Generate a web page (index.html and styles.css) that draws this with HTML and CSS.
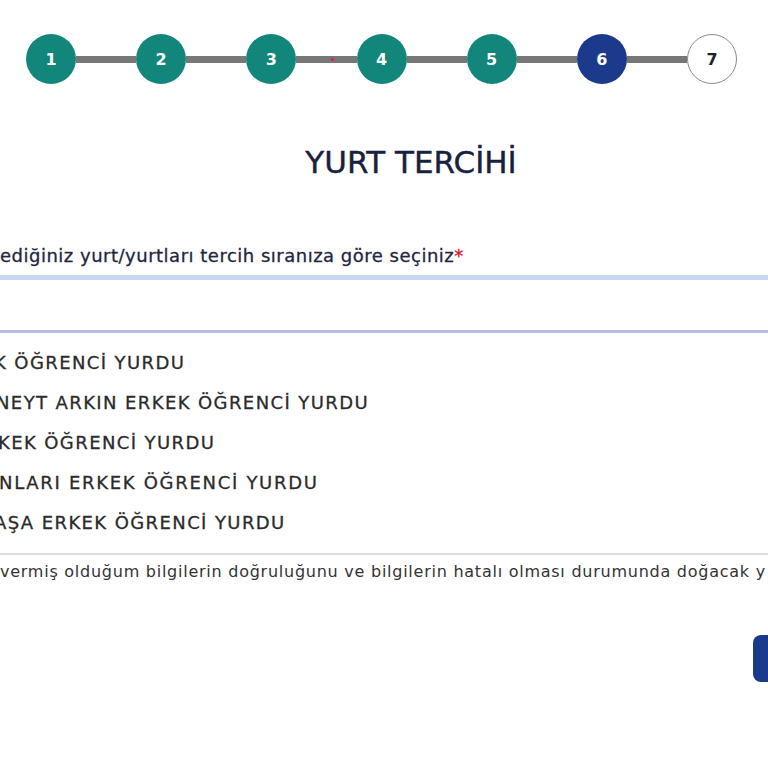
FILE: index.html
```html
<!DOCTYPE html>
<html lang="tr">
<head>
<meta charset="utf-8">
<title>Yurt Tercihi</title>
<link rel="stylesheet" href="styles.css">
</head>
<body>
<div class="page">
  <div class="stepper">
    <div class="step done">1</div>
    <div class="conn"></div>
    <div class="step done">2</div>
    <div class="conn"></div>
    <div class="step done">3</div>
    <div class="conn"><span class="dot"></span></div>
    <div class="step done">4</div>
    <div class="conn"></div>
    <div class="step done">5</div>
    <div class="conn"></div>
    <div class="step current">6</div>
    <div class="conn"></div>
    <div class="step todo">7</div>
  </div>

  <h1 class="title">YURT TERCİHİ</h1>

  <div class="label">ediğiniz yurt/yurtları tercih sıranıza göre seçiniz<span class="req">*</span></div>
  <div class="input"></div>

  <ul class="options">
    <li class="opt o1">K ÖĞRENCİ YURDU</li>
    <li class="opt o2">NEYT ARKIN ERKEK ÖĞRENCİ YURDU</li>
    <li class="opt o3">KEK ÖĞRENCİ YURDU</li>
    <li class="opt o4">NLARI ERKEK ÖĞRENCİ YURDU</li>
    <li class="opt o5">AŞA ERKEK ÖĞRENCİ YURDU</li>
  </ul>

  <div class="consent">vermiş olduğum bilgilerin doğruluğunu ve bilgilerin hatalı olması durumunda doğacak y</div>

  <div class="actions"><button class="btn" type="button"></button></div>
</div>
</body>
</html>
```

FILE: styles.css
```css
html, body {
  margin: 0;
  padding: 0;
  background: #ffffff;
}
body {
  overflow: hidden;
  width: 768px;
  height: 768px;
  font-family: "DejaVu Sans", "Open Sans", sans-serif;
}
.page {
  width: 768px;
}
.stepper {
  display: flex;
  align-items: center;
  width: 711px;
  margin-left: 26px;
  padding-top: 34px;
}
.step {
  flex: 0 0 auto;
  width: 50px;
  height: 50px;
  box-sizing: border-box;
  border-radius: 50%;
  display: flex;
  align-items: center;
  justify-content: center;
  font-size: 16px;
  font-weight: 700;
  color: #ffffff;
}
.step.done { background: #12867a; }
.step.current { background: #1b3a8b; }
.step.todo {
  background: #ffffff;
  border: 1px solid #8a8a8a;
  color: #222222;
}
.conn {
  flex: 1 1 0;
  min-width: 0;
  height: 7px;
  background: #777777;
  display: flex;
  align-items: center;
}
.dot {
  width: 3px;
  height: 3px;
  margin-left: 35px;
  background: #e0203a;
  border-radius: 50%;
}
.title {
  margin: 58px 0 0 0;
  padding-left: 54px;
  text-align: center;
  font-size: 31px;
  line-height: 40px;
  font-weight: 400;
  color: #18213d;
  -webkit-text-stroke: 0.4px #18213d;
}
.label {
  margin-top: 62px;
  font-size: 18px;
  line-height: 24px;
  font-weight: 400;
  color: #1e2640;
  white-space: nowrap;
  letter-spacing: 0.5px;
  -webkit-text-stroke: 0.3px #1e2640;
}
.req { color: #e0102a; -webkit-text-stroke: 0.3px #e0102a; }
.input {
  margin-top: 7px;
  height: 50px;
  border-top: 5px solid #c9d6f5;
  border-bottom: 3px solid #b3bce8;
  background: #fff;
}
.options {
  list-style: none;
  margin: 10px 0 0 0;
  padding: 0;
}
.opt {
  height: 40px;
  line-height: 40px;
  font-size: 18px;
  color: #2b2b2b;
  white-space: nowrap;
  letter-spacing: 1.4px;
  -webkit-text-stroke: 0.3px #2b2b2b;
}
.o1 { text-indent: -6px; }
.o2 { text-indent: -4px; }
.o3 { text-indent: -2px; }
.o4 { text-indent: -1px; letter-spacing: 1.7px; }
.o5 { text-indent: -6px; }
.consent {
  margin-top: 10px;
  border-top: 2px solid #dedede;
  padding-top: 5px;
  font-size: 16px;
  line-height: 24px;
  color: #333333;
  white-space: nowrap;
  letter-spacing: 0.75px;
}
.actions {
  margin-top: 51px;
  padding-left: 753px;
  display: flex;
}
.btn {
  flex: 0 0 auto;
  width: 110px;
  height: 47px;
  border: none;
  border-radius: 8px;
  background: #1b3a8b;
  color: #fff;
  font-family: inherit;
  font-size: 16px;
}
```
